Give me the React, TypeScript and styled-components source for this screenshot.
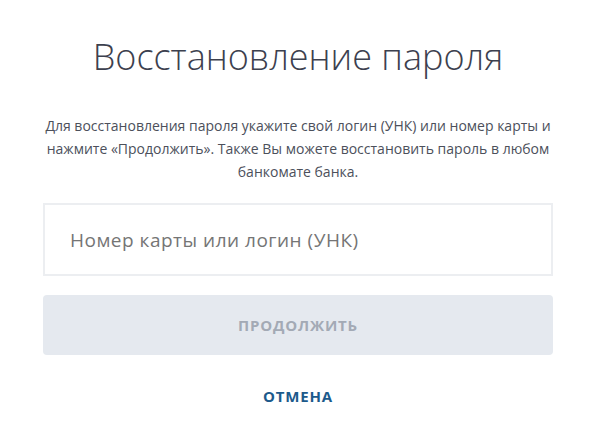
import React from 'react'
import styled, { createGlobalStyle } from 'styled-components'

const GlobalStyle = createGlobalStyle`
  html, body {
    margin: 0;
    padding: 0;
    background: #ffffff;
  }
  body {
    font-family: 'Open Sans', 'Noto Sans', sans-serif;
  }
`

const Page = styled.div`
  width: 600px;
  height: 441px;
  box-sizing: border-box;
  padding: 29px 47px 0 43px;
  display: flex;
  flex-direction: column;
  align-items: stretch;
`

const Title = styled.h1`
  margin: 0;
  font-weight: 300;
  font-size: 36px;
  line-height: 56px;
  color: #3c404e;
  text-align: center;
`

const Description = styled.p`
  margin: 29px 0 0;
  font-size: 14px;
  line-height: 23px;
  color: #4c505b;
  text-align: center;
`

const Field = styled.input`
  margin-top: 20px;
  height: 73px;
  box-sizing: border-box;
  border: 2px solid #eceef1;
  border-radius: 0;
  padding: 0 25px;
  font-family: inherit;
  font-size: 19px;
  letter-spacing: 0.5px;
  color: #3c404e;
  outline: none;

  ::placeholder {
    color: #aab0b9;
  }
`

const Button = styled.button<{ disabled?: boolean }>`
  margin-top: 19px;
  height: 60px;
  border: none;
  border-radius: 4px;
  background: ${({ disabled }) => (disabled ? '#e5e9ef' : '#1d5b8f')};
  color: ${({ disabled }) => (disabled ? '#a3aab5' : '#ffffff')};
  font-family: inherit;
  font-size: 15px;
  font-weight: 700;
  letter-spacing: 0.8px;
  text-transform: uppercase;
`

const LinkButton = styled.button`
  margin-top: 27px;
  align-self: center;
  border: none;
  background: none;
  padding: 4px 8px;
  color: #1c5a8b;
  font-family: inherit;
  font-size: 15px;
  line-height: 20px;
  font-weight: 700;
  letter-spacing: 0.8px;
  text-transform: uppercase;
`

export default function App() {
  return (
    <>
      <GlobalStyle />
      <Page>
        <Title>Восстановление пароля</Title>
        <Description>
          Для восстановления пароля укажите свой логин (УНК) или номер карты и нажмите «Продолжить». Также Вы можете
          восстановить пароль в любом банкомате банка.
        </Description>
        <Field placeholder="Номер карты или логин (УНК)" />
        <Button disabled>Продолжить</Button>
        <LinkButton>Отмена</LinkButton>
      </Page>
    </>
  )
}
